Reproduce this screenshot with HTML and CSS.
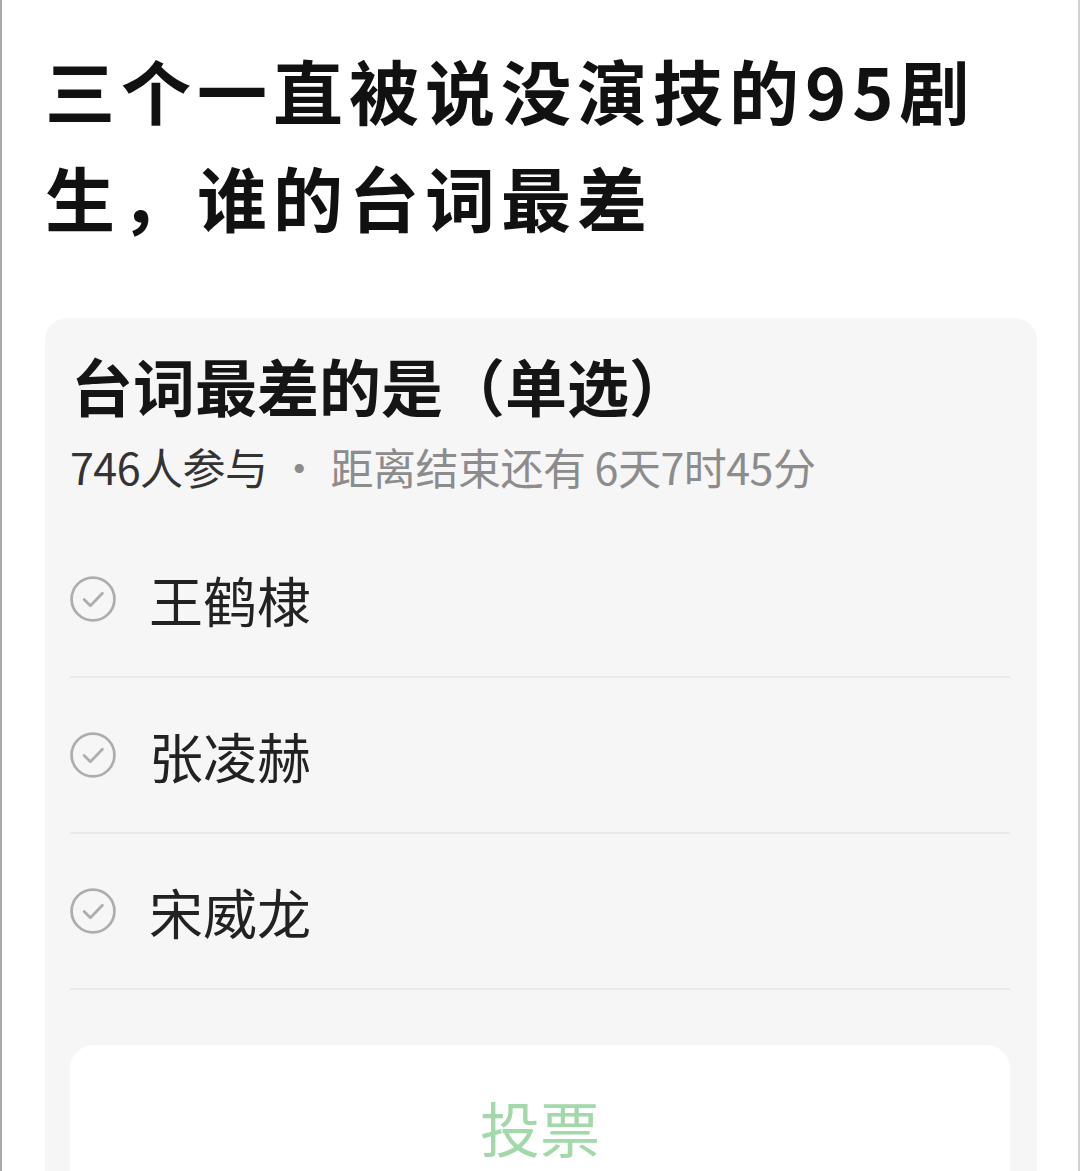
FILE: index.html
```html
<!DOCTYPE html>
<html lang="zh-CN">
<head>
    <meta charset="UTF-8">
    <meta name="viewport" content="width=device-width, initial-scale=1.0">
    <title>投票</title>
    <link rel="stylesheet" href="styles.css">
</head>
<body>
    <div class="page">
        <h1 class="post-title">三个一直被说没演技的95剧生，谁的台词最差</h1>

        <div class="poll">
            <h2 class="poll-title">台词最差的是（单选）</h2>
            <div class="poll-meta">
                <span class="count">746人参与</span>
                <span class="sep">·</span>
                <span class="remain">距离结束还有 6天7时45分</span>
            </div>

            <ul class="options">
                <li class="option">
                    <svg class="check" viewBox="0 0 44 44">
                        <circle cx="22" cy="22" r="20.5" />
                        <path d="M13.5 22.5 L19.5 28.5 L31 16.5" />
                    </svg>
                    <span>王鹤棣</span>
                </li>
                <li class="option">
                    <svg class="check" viewBox="0 0 44 44">
                        <circle cx="22" cy="22" r="20.5" />
                        <path d="M13.5 22.5 L19.5 28.5 L31 16.5" />
                    </svg>
                    <span>张凌赫</span>
                </li>
                <li class="option">
                    <svg class="check" viewBox="0 0 44 44">
                        <circle cx="22" cy="22" r="20.5" />
                        <path d="M13.5 22.5 L19.5 28.5 L31 16.5" />
                    </svg>
                    <span>宋威龙</span>
                </li>
            </ul>

            <button class="vote-btn" disabled>投票</button>
        </div>
    </div>
</body>
</html>
```

FILE: styles.css
```css
body {
    margin: 0;
    background: #fff;
    font-family: "Noto Sans CJK SC", "Noto Sans", sans-serif;
    color: #111;
    overflow: hidden;
}
.page {
    min-height: 100vh;
    border-left: 2px solid #a9a9a9;
    border-right: 2px solid #d0d0d0;
    box-sizing: border-box;
    padding: 36px 41px 0 43px;
}
.post-title {
    margin: 0;
    font-size: 70px;
    line-height: 107px;
    font-weight: 700;
    letter-spacing: 6px;
    color: #111;
}
.poll {
    margin-top: 68px;
    background: #f6f6f6;
    border-radius: 22px;
    padding: 26px 27px 0 25px;
}
.poll-title {
    margin: 0 0 0 1px;
    font-size: 62px;
    line-height: 82px;
    font-weight: 700;
    color: #151515;
}
.poll-meta {
    margin-top: 9px;
    font-size: 43px;
    line-height: 62px;
    color: #8c8c8c;
    letter-spacing: -0.5px;
}
.poll-meta .count {
    color: #333;
}
.poll-meta .sep {
    margin: 0 1px;
}
.options {
    list-style: none;
    margin: 25px 0 0;
    padding: 0;
}
.option {
    display: flex;
    align-items: center;
    height: 154px;
    border-bottom: 2px solid #e9e9e9;
    font-size: 54px;
    color: #222;
}
.check {
    width: 46px;
    height: 46px;
    margin-right: 33px;
    fill: none;
    stroke: #adadad;
    stroke-width: 2.6;
    stroke-linecap: round;
    stroke-linejoin: round;
}
.vote-btn {
    display: block;
    width: 100%;
    height: 164px;
    margin-top: 55px;
    padding: 0;
    border: none;
    border-radius: 24px;
    background: #fff;
    font-family: inherit;
    font-size: 60px;
    line-height: 60px;
    color: #a3d9aa;
}
```
